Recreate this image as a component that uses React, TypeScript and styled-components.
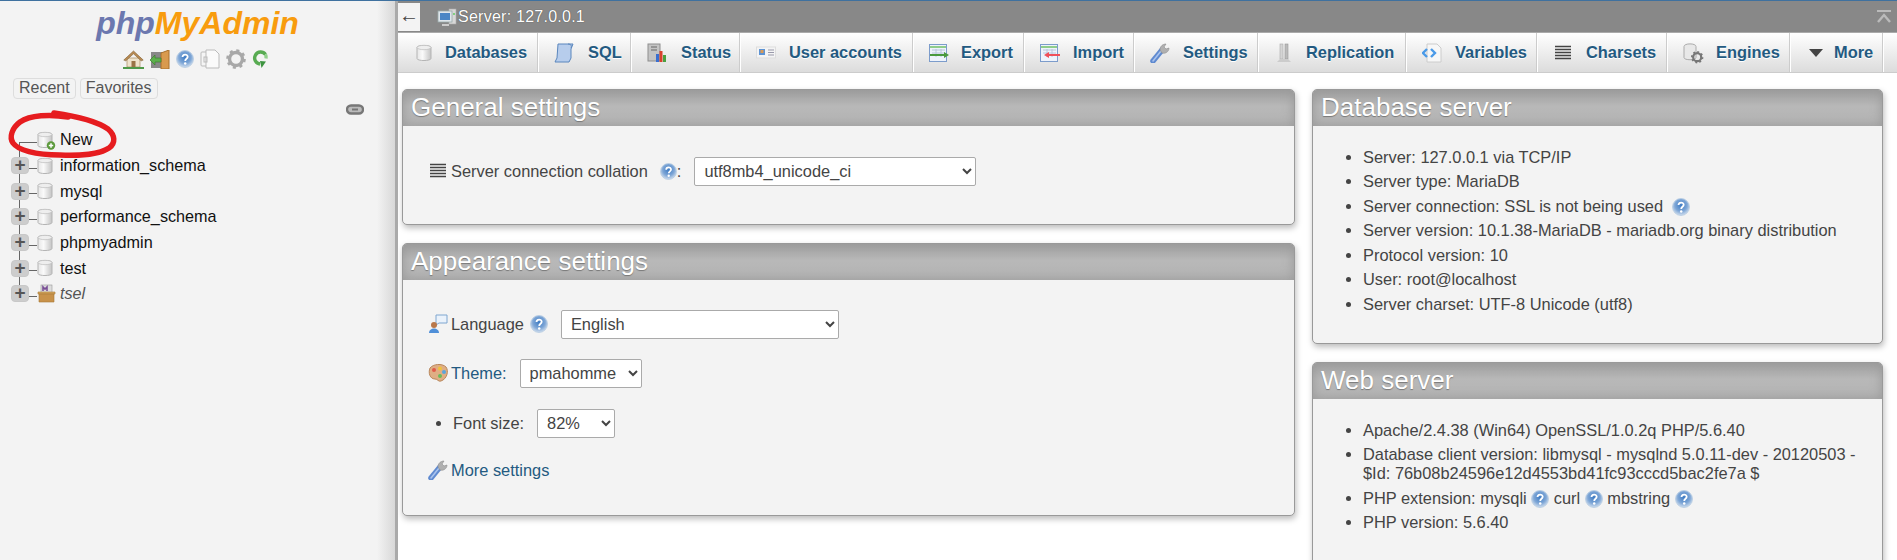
import React from 'react';
import styled, { createGlobalStyle } from 'styled-components';

const Global = createGlobalStyle`
  html, body { margin: 0; padding: 0; height: 100%; overflow: hidden; background: #fff; }
  body { font-family: "Liberation Sans", Arial, sans-serif; color: #444; font-size: 16.4px; }
`;

const Page = styled.div`
  position: relative;
  display: flex;
  width: 1897px;
  height: 560px;
  overflow: hidden;
  border-top: 1px solid #3f719f;
  box-sizing: border-box;
`;

/* ---------- navigation ---------- */
const Sidebar = styled.aside`
  width: 395px;
  flex: none;
  background: linear-gradient(90deg, #f3f3f3 0, #f3f3f3 377px, #d8d8d8 395px);
  display: flex;
  flex-direction: column;
  padding-top: 7px;
  box-sizing: border-box;
`;
const Logo = styled.div`
  text-align: center;
  font: italic bold 32px/30px "Liberation Sans", Arial, sans-serif;
  color: #f89c0e;
  height: 33px;
  span { color: #6c78af; }
`;
const NavIcons = styled.div`
  display: flex;
  justify-content: center;
  align-items: center;
  gap: 6px;
  margin-top: 7px;
  height: 22px;
  padding-right: 3px;
`;
const RecentRow = styled.div`
  display: flex;
  gap: 4px;
  margin: 8px 0 0 13px;
`;
const SmallBtn = styled.div`
  border: 1px solid #ddd;
  border-radius: 4px;
  padding: 0 5px;
  height: 19px;
  line-height: 18px;
  color: #555;
  font-size: 16px;
`;
const LinkRow = styled.div`
  display: flex;
  justify-content: flex-end;
  padding: 5px 31px 0 0;
  height: 13px;
`;
const Tree = styled.ul`
  list-style: none;
  margin: 10px 0 0;
  padding: 0 0 0 11px;
`;
const TreeRow = styled.li<{ $first?: boolean; $last?: boolean }>`
  position: relative;
  display: flex;
  align-items: center;
  height: 25.7px;
  &::before {
    content: '';
    position: absolute;
    left: 8px;
    top: ${p => (p.$first ? '15px' : '-3px')};
    bottom: ${p => (p.$last ? '10px' : '-3px')};
    border-left: 1px solid #666;
  }
  &::after {
    content: '';
    position: absolute;
    left: 8px;
    width: 18px;
    top: 15px;
    border-top: 1px solid #666;
  }
`;
const Expander = styled.span<{ $hidden?: boolean }>`
  position: relative;
  z-index: 1;
  width: 18px;
  height: 17px;
  box-sizing: border-box;
  border: 1px solid #c8c8c8;
  border-radius: 4px;
  background: #cdcdcd;
  color: #555;
  font: bold 19px/14px "Liberation Sans", sans-serif;
  text-align: center;
  visibility: ${p => (p.$hidden ? 'hidden' : 'visible')};
`;
const TreeIcon = styled.span`
  position: relative;
  z-index: 1;
  display: flex;
  width: 16px;
  margin-left: 8px;
`;
const TreeLabel = styled.span<{ $italic?: boolean }>`
  margin-left: 7px;
  color: ${p => (p.$italic ? '#555' : '#111')};
  font-style: ${p => (p.$italic ? 'italic' : 'normal')};
  font-size: 16.2px;
`;
const Scribble = styled.svg`
  position: absolute;
  left: 0;
  top: -1px;
  pointer-events: none;
`;

/* ---------- main ---------- */
const Main = styled.main`
  flex: 1;
  min-width: 0;
  border-left: 3px solid #aaa;
  display: flex;
  flex-direction: column;
`;
const ServerBar = styled.header`
  height: 31px;
  flex: none;
  background: #888;
  display: flex;
  align-items: center;
  color: #fff;
  font-size: 16px;
  text-shadow: 0 0 1px #333;
`;
const BackBtn = styled.div`
  width: 22px;
  height: 28px;
  margin-right: 17px;
  background: #f3f3f3;
  color: #444;
  text-shadow: none;
  text-align: center;
  font: 20px/25px "Liberation Serif", serif;
`;
const ServerText = styled.span`
  margin-left: 1px;
  letter-spacing: 0.25px;
`;
const CollapseIcon = styled.svg`
  margin-left: auto;
  margin-right: 6px;
`;
const Menu = styled.nav`
  display: flex;
  flex: none;
  height: 41px;
  background: linear-gradient(#fff, #dcdcdc);
  border-bottom: 1px solid #ccc;
  border-top: 1px solid #aaa;
  box-sizing: border-box;
`;
const Tab = styled.a<{ $w: number }>`
  display: flex;
  align-items: center;
  width: ${p => p.$w}px;
  flex: none;
  box-sizing: border-box;
  padding-left: 16px;
  border-right: 1px solid #ccc;
  box-shadow: 1px 0 0 #fff;
  color: #235a81;
  font-weight: bold;
  font-size: 16.4px;
  text-shadow: 0 1px 0 #fff;
  white-space: nowrap;
`;
const TabIcon = styled.span<{ $gap: number }>`
  display: flex;
  justify-content: center;
  width: 20px;
  margin-right: ${p => p.$gap}px;
  flex: none;
`;
const Content = styled.div`
  flex: 1;
  min-height: 0;
  display: grid;
  grid-template-columns: 893px 571px;
  column-gap: 17px;
  padding: 16px 0 0 4px;
  align-items: start;
`;
const Column = styled.div`
  display: flex;
  flex-direction: column;
  gap: 18px;
`;
const Panel = styled.section<{ $h: number }>`
  border: 1px solid #999;
  border-radius: 5px;
  background: #f3f3f3;
  box-shadow: 1px 3px 6px #bbb;
  height: ${p => p.$h}px;
  flex: none;
  box-sizing: border-box;
  overflow: hidden;
`;
const PanelTitle = styled.h2`
  margin: 0;
  height: 36px;
  padding-left: 8px;
  background: linear-gradient(#a0a0a0, #b8b8b8 45%, #b4b4b4);
  box-shadow: inset 0 0 12px #999;
  color: #fff;
  font: normal 26px/34px "Liberation Sans", Arial, sans-serif;
  text-shadow: 0 1px 1px #777;
`;
const FormBody = styled.div<{ $pad: number }>`
  padding: ${p => p.$pad}px 0 0 24px;
  display: flex;
  flex-direction: column;
`;
const FormRow = styled.div<{ $mt?: number }>`
  display: flex;
  align-items: center;
  height: 30px;
  margin-top: ${p => p.$mt ?? 0}px;
`;
const RowIcon = styled.span`
  display: flex;
  justify-content: center;
  width: 21px;
  margin-right: 3px;
`;
const Bullet = styled.span`
  width: 5px;
  height: 5px;
  border-radius: 50%;
  background: #444;
  margin: 0 12px 0 9px;
  flex: none;
`;
const RowLink = styled.span`
  color: #235a81;
`;
const HelpGap = styled.span<{ $w: number }>`
  display: inline-flex;
  margin-left: ${p => p.$w}px;
`;
const Select = styled.select<{ $w: number }>`
  width: ${p => p.$w}px;
  height: 29px;
  margin-left: 13px;
  background: #fff;
  border: 1px solid #aaa;
  border-radius: 2px;
  color: #444;
  font: 16.4px "Liberation Sans", Arial, sans-serif;
  padding: 0 5px;
`;
const InfoList = styled.ul`
  margin: 0;
  padding: 21.5px 24px 0 50px;
`;
const InfoItem = styled.li`
  margin-bottom: 5.5px;
  line-height: 19px;
  svg { vertical-align: -4px; }
`;

const Help = ({ s = 17 }: { s?: number }) => (
  <svg width={s} height={s} viewBox="0 0 16 16" style={{ flex: 'none' }}>
    <defs>
      <radialGradient id="hlp" cx="50%" cy="40%" r="60%">
        <stop offset="0" stopColor="#3f7cc4" />
        <stop offset="0.6" stopColor="#7ea6d6" />
        <stop offset="1" stopColor="#d0deee" />
      </radialGradient>
    </defs>
    <circle cx="8" cy="8" r="7.5" fill="url(#hlp)" stroke="#b7cce2" strokeWidth="0.8" />
    <path d="M5.8 6.3c0-3 4.6-3 4.6-.2 0 1.8-2.2 1.7-2.2 3.6" fill="none" stroke="#fff" strokeWidth="1.6" />
    <circle cx="8.2" cy="12" r="1.1" fill="#fff" />
  </svg>
);

const Db = ({ w = 16, h = 18, plus = false }: { w?: number; h?: number; plus?: boolean }) => (
  <svg width={w} height={h} viewBox="0 0 16 18" style={{ overflow: 'visible' }}>
    <defs>
      <linearGradient id="dbg" x1="0" x2="1" y1="0" y2="0">
        <stop offset="0" stopColor="#e6e6e6" />
        <stop offset="0.4" stopColor="#fafafa" />
        <stop offset="1" stopColor="#c4c4c4" />
      </linearGradient>
    </defs>
    <path d="M1 3.5C1 .8 15 .8 15 3.5v11c0 2.7-14 2.7-14 0z" fill="url(#dbg)" stroke="#b4b4b4" />
    <ellipse cx="8" cy="3.5" rx="7" ry="2.2" fill="#eee" stroke="#bbb" strokeWidth="0.7" />
    {plus && (
      <>
        <circle cx="14" cy="14.5" r="4.2" fill="#5c9a3c" />
        <path d="M11.8 14.5h4.4M14 12.3v4.4" stroke="#fff" strokeWidth="1.5" />
      </>
    )}
  </svg>
);

const Home = () => (
  <svg width="21" height="19" viewBox="0 0 21 19">
    <rect x="4" y="8" width="13" height="9" fill="#efe3cc" stroke="#a98a5e" strokeWidth="0.7" />
    <path d="M10.5 1 .8 10l2 .8 7.7-7 7.7 7 2-.8z" fill="#b98a52" stroke="#8a6a3f" strokeWidth="0.7" />
    <rect x="8.5" y="11" width="4" height="6" fill="#9a7446" />
    <path d="M0 18h21" stroke="#4f9a4a" strokeWidth="2" />
  </svg>
);
const ExitDoor = () => (
  <svg width="20" height="19" viewBox="0 0 20 19">
    <rect x="1" y="2" width="11" height="16" fill="#888" />
    <path d="M11 3l8-3v19h-8z" fill="#d99a4e" stroke="#a8702c" />
    <path d="M0 10l5-5v3h6v4H5v3z" fill="#5cb04c" stroke="#3c7f30" strokeWidth="0.7" />
  </svg>
);
const Docs = () => (
  <svg width="20" height="20" viewBox="0 0 20 20">
    <rect x="1" y="3" width="10" height="14" rx="1" fill="#f5f5f5" stroke="#bbb" />
    <path d="M6 1h9l4 4v14H6z" fill="#fafafa" stroke="#bbb" />
    <rect x="4" y="8" width="3" height="5" fill="none" stroke="#bbb" />
  </svg>
);
const Gear = ({ s = 20, c = '#a8a8a8' }: { s?: number; c?: string }) => (
  <svg width={s} height={s} viewBox="0 0 20 20">
    <circle cx="10" cy="10" r="6.5" fill="none" stroke={c} strokeWidth="3.4" />
    <circle cx="10" cy="10" r="8.4" fill="none" stroke={c} strokeWidth="2.8" strokeDasharray="3 3.6" />
  </svg>
);
const Reload = () => (
  <svg width="17" height="19" viewBox="0 0 17 19">
    <path d="M13.5 4.5A6 6 0 1 0 8 14" fill="none" stroke="#58ab52" strokeWidth="3.4" />
    <path d="M13.5 4.5a6 6 0 0 1 .5 4" fill="none" stroke="#8fd08a" strokeWidth="3.4" />
    <path d="M8 11l6 .5-4.5 6.5z" fill="#3d9440" />
  </svg>
);
const ChainLink = () => (
  <svg width="18" height="11" viewBox="0 0 18 11">
    <rect x="1" y="1.5" width="16" height="8" rx="4" fill="#bbb" stroke="#777" strokeWidth="2.4" />
    <path d="M6 5.5h6" stroke="#777" strokeWidth="2" />
  </svg>
);
const Archive = () => (
  <svg width="19" height="19" viewBox="0 0 19 19" style={{ overflow: 'visible' }}>
    <rect x="4" y="1" width="11" height="8" fill="#ddd" stroke="#999" strokeWidth="0.6" />
    <path d="M6 7V3l2 2 2-2v4" fill="none" stroke="#7a4f96" strokeWidth="1.6" />
    <path d="M1 8h17v2H1z" fill="#d8a860" stroke="#a87a36" strokeWidth="0.6" />
    <path d="M2 10h15v8H2z" fill="#c8924a" stroke="#a87a36" strokeWidth="0.6" />
  </svg>
);
const ServerIcon = () => (
  <svg width="20" height="20" viewBox="0 0 20 20">
    <rect x="12" y="2" width="7" height="15" fill="#d8d8d8" stroke="#aaa" strokeWidth="0.6" />
    <rect x="1" y="4" width="14" height="11" fill="#dfe6ec" stroke="#9aa" strokeWidth="0.8" />
    <rect x="3" y="6" width="10" height="7" fill="#4a86c5" />
    <path d="M5 18h7" stroke="#ccc" strokeWidth="2" />
    <circle cx="17" cy="7" r="0.9" fill="#5c5" />
  </svg>
);
const Scroll = () => (
  <svg width="20" height="20" viewBox="0 0 20 20">
    <path d="M4 1h15l-2 5v9l-2 4H1l2-4z" fill="#b7cdec" stroke="#5a86bd" />
    <path d="M14 1c3 0 4 2 3 4" fill="none" stroke="#5a86bd" />
  </svg>
);
const StatusIcon = () => (
  <svg width="20" height="20" viewBox="0 0 20 20">
    <rect x="1" y="1" width="12" height="17" fill="#c4c4c4" stroke="#8e8e8e" />
    <path d="M4 4h6M4 7h6" stroke="#666" />
    <rect x="9" y="11" width="3" height="8" fill="#3a6fd0" />
    <rect x="12.5" y="8" width="3" height="11" fill="#d8402c" />
    <rect x="16" y="12" width="3" height="7" fill="#49a040" />
  </svg>
);
const UserCard = () => (
  <svg width="20" height="14" viewBox="0 0 20 14">
    <rect x="0.5" y="1" width="19" height="11" fill="#f4f4f4" stroke="#ddd" />
    <rect x="3" y="3" width="6" height="6" fill="#5d93d3" />
    <rect x="4.5" y="4" width="3" height="3" fill="#d89a58" />
    <path d="M12 4h6M12 6.5h6M12 9h6" stroke="#99a" />
  </svg>
);
const TableArrow = ({ c, dir }: { c: string; dir: 'in' | 'out' }) => (
  <svg width="20" height="18" viewBox="0 0 20 18" style={{ overflow: 'visible' }}>
    <rect x="0.5" y="0.5" width="17" height="17" fill="#eef3fb" stroke="#7c9ccb" />
    <path d="M1 3h16" stroke="#6fc066" strokeWidth="1.5" />
    <path d="M3 6h13M3 9h13M7 5v8M12 5v8" stroke="#b8c6dc" />
    {dir === 'out' ? (
      <path d="M1 10h14V8l5 3-5 3v-2H1z" fill={c} />
    ) : (
      <path d="M20 10H9V8l-5 3 5 3v-2h11z" fill={c} />
    )}
  </svg>
);
const Wrench = ({ s = 20 }: { s?: number }) => (
  <svg width={s} height={s} viewBox="0 0 20 20">
    <path d="M3 18 12 7" stroke="#5f8ad0" strokeWidth="5.5" strokeLinecap="round" />
    <path d="M3 18 11 8" stroke="#a9c3ee" strokeWidth="1.6" strokeLinecap="round" />
    <path d="M10 7c0-4 3-6 6-6l-2 3 2 2 3-1c0 4-4 6-7 5z" fill="#b0b0b0" stroke="#8d8d8d" strokeWidth="0.6" />
  </svg>
);
const Replication = () => (
  <svg width="16" height="20" viewBox="0 0 16 20">
    <rect x="4" y="1" width="3" height="15" fill="#d4d4d4" stroke="#aaa" strokeWidth="0.6" />
    <rect x="9" y="1" width="3" height="15" fill="#bbb" stroke="#999" strokeWidth="0.6" />
    <path d="M1 19h14l-3-3H4z" fill="#ccc" />
  </svg>
);
const Variables = () => (
  <svg width="20" height="20" viewBox="0 0 20 20">
    <path d="M5 1h10l4 4v14H5z" fill="#f7f7f7" stroke="#ccc" />
    <path d="M5 6l-4 4 4 4" fill="none" stroke="#4a9ae8" strokeWidth="2.4" />
    <path d="M9 6l4 4-4 4" fill="none" stroke="#4a9ae8" strokeWidth="2.4" />
  </svg>
);
const Lines = () => (
  <svg width="16" height="16" viewBox="0 0 16 16">
    <path d="M0 1.5h16M0 4.5h16M0 7.5h16M0 10.5h16M0 13.5h16" stroke="#444" strokeWidth="1.5" />
  </svg>
);
const EngineIcon = () => (
  <svg width="20" height="20" viewBox="0 0 20 20" style={{ overflow: 'visible' }}>
    <path d="M1 3.5C1 0 13 0 13 3.5v11c0 3-12 3-12 0z" fill="#e8e8e8" stroke="#aaa" />
    <g transform="translate(8 8) scale(0.62)">
      <circle cx="10" cy="10" r="6.5" fill="none" stroke="#777" strokeWidth="3.6" />
      <circle cx="10" cy="10" r="8.6" fill="none" stroke="#777" strokeWidth="2.8" strokeDasharray="3 3.6" />
    </g>
  </svg>
);
const Caret = () => (
  <svg width="14" height="8" viewBox="0 0 14 8">
    <path d="M0 0h14L7 8z" fill="#444" />
  </svg>
);
const LangIcon = () => (
  <svg width="20" height="20" viewBox="0 0 20 20">
    <path d="M8 1h11v8H11l-3 2z" fill="#eaf2fb" stroke="#7fa6d0" />
    <circle cx="6" cy="11" r="3" fill="#b9784a" />
    <path d="M1 19c0-6 10-6 10 0z" fill="#4f8fd8" />
  </svg>
);
const Palette = () => (
  <svg width="20" height="20" viewBox="0 0 20 20">
    <path d="M2 5c3-4 12-5 16-1 3 4 1 12-5 14-3 1-3-2-6-2-5 0-7-6-5-11z" fill="#dfae84" stroke="#b9875c" />
    <circle cx="6" cy="7" r="2" fill="#e25a4a" />
    <circle cx="12" cy="5.5" r="2" fill="#f0c23c" />
    <circle cx="16" cy="9" r="2" fill="#5aa4dc" />
    <circle cx="12" cy="13" r="2" fill="#6abb5a" />
  </svg>
);

const tabs: { label: string; w: number; gap: number; icon: React.ReactNode }[] = [
  { label: 'Databases', w: 140, gap: 11, icon: <Db /> },
  { label: 'SQL', w: 93, gap: 14, icon: <Scroll /> },
  { label: 'Status', w: 109, gap: 14, icon: <StatusIcon /> },
  { label: 'User accounts', w: 173, gap: 13, icon: <UserCard /> },
  { label: 'Export', w: 111, gap: 12, icon: <TableArrow c="#4a9a3e" dir="out" /> },
  { label: 'Import', w: 110, gap: 13, icon: <TableArrow c="#f0505a" dir="in" /> },
  { label: 'Settings', w: 124, gap: 13, icon: <Wrench /> },
  { label: 'Replication', w: 148, gap: 12, icon: <Replication /> },
  { label: 'Variables', w: 131, gap: 13, icon: <Variables /> },
  { label: 'Charsets', w: 130, gap: 13, icon: <Lines /> },
  { label: 'Engines', w: 123, gap: 13, icon: <EngineIcon /> },
  { label: 'More', w: 93, gap: 8, icon: <Caret /> },
];

const dbs = ['information_schema', 'mysql', 'performance_schema', 'phpmyadmin', 'test'];

export default function App() {
  return (
    <>
      <Global />
      <Page>
        <Sidebar>
          <Logo><span>php</span>MyAdmin</Logo>
          <NavIcons>
            <Home /><ExitDoor /><Help s={18} /><Docs /><Gear /><Reload />
          </NavIcons>
          <RecentRow>
            <SmallBtn>Recent</SmallBtn>
            <SmallBtn>Favorites</SmallBtn>
          </RecentRow>
          <LinkRow><ChainLink /></LinkRow>
          <Tree>
            <TreeRow $first>
              <Expander $hidden />
              <TreeIcon><Db plus /></TreeIcon>
              <TreeLabel>New</TreeLabel>
            </TreeRow>
            {dbs.map(d => (
              <TreeRow key={d}>
                <Expander>+</Expander>
                <TreeIcon><Db /></TreeIcon>
                <TreeLabel>{d}</TreeLabel>
              </TreeRow>
            ))}
            <TreeRow $last>
              <Expander>+</Expander>
              <TreeIcon><Archive /></TreeIcon>
              <TreeLabel $italic>tsel</TreeLabel>
            </TreeRow>
          </Tree>
        </Sidebar>
        <Main>
          <ServerBar>
            <BackBtn>←</BackBtn>
            <ServerIcon />
            <ServerText>Server: 127.0.0.1</ServerText>
            <CollapseIcon width="14" height="14" viewBox="0 0 14 14">
              <path d="M0 1h14" stroke="#bbb" strokeWidth="2" />
              <path d="M1 12l6-7 6 7" fill="none" stroke="#bbb" strokeWidth="2.4" />
            </CollapseIcon>
          </ServerBar>
          <Menu>
            {tabs.map(t => (
              <Tab key={t.label} $w={t.w}>
                <TabIcon $gap={t.gap}>{t.icon}</TabIcon>
                {t.label}
              </Tab>
            ))}
          </Menu>
          <Content>
            <Column>
              <Panel $h={136}>
                <PanelTitle>General settings</PanelTitle>
                <FormBody $pad={30}>
                  <FormRow>
                    <RowIcon><Lines /></RowIcon>
                    Server connection collation
                    <HelpGap $w={12}><Help /></HelpGap>:
                    <Select $w={282} defaultValue="a"><option value="a">utf8mb4_unicode_ci</option></Select>
                  </FormRow>
                </FormBody>
              </Panel>
              <Panel $h={273}>
                <PanelTitle>Appearance settings</PanelTitle>
                <FormBody $pad={29}>
                  <FormRow>
                    <RowIcon><LangIcon /></RowIcon>
                    Language
                    <HelpGap $w={6}><Help s={18} /></HelpGap>
                    <Select $w={278} defaultValue="a"><option value="a">English</option></Select>
                  </FormRow>
                  <FormRow $mt={19}>
                    <RowIcon><Palette /></RowIcon>
                    <RowLink>Theme:</RowLink>
                    <Select $w={122} defaultValue="a"><option value="a">pmahomme</option></Select>
                  </FormRow>
                  <FormRow $mt={20}>
                    <Bullet />
                    Font size:
                    <Select $w={78} defaultValue="a"><option value="a">82%</option></Select>
                  </FormRow>
                  <FormRow $mt={17}>
                    <RowIcon><Wrench /></RowIcon>
                    <RowLink>More settings</RowLink>
                  </FormRow>
                </FormBody>
              </Panel>
            </Column>
            <Column>
              <Panel $h={255}>
                <PanelTitle>Database server</PanelTitle>
                <InfoList>
                  <InfoItem>Server: 127.0.0.1 via TCP/IP</InfoItem>
                  <InfoItem>Server type: MariaDB</InfoItem>
                  <InfoItem>Server connection: SSL is not being used &nbsp;<Help s={18} /></InfoItem>
                  <InfoItem>Server version: 10.1.38-MariaDB - mariadb.org binary distribution</InfoItem>
                  <InfoItem>Protocol version: 10</InfoItem>
                  <InfoItem>User: root@localhost</InfoItem>
                  <InfoItem>Server charset: UTF-8 Unicode (utf8)</InfoItem>
                </InfoList>
              </Panel>
              <Panel $h={300}>
                <PanelTitle>Web server</PanelTitle>
                <InfoList>
                  <InfoItem>Apache/2.4.38 (Win64) OpenSSL/1.0.2q PHP/5.6.40</InfoItem>
                  <InfoItem>Database client version: libmysql - mysqlnd 5.0.11-dev - 20120503 - $Id: 76b08b24596e12d4553bd41fc93cccd5bac2fe7a $</InfoItem>
                  <InfoItem>PHP extension: mysqli <Help s={18} /> curl <Help s={18} /> mbstring <Help s={18} /></InfoItem>
                  <InfoItem>PHP version: 5.6.40</InfoItem>
                </InfoList>
              </Panel>
            </Column>
          </Content>
        </Main>
        <Scribble width="130" height="170" viewBox="0 0 130 170">
          <path
            d="M68 117C50 114 30 115 20 122C12 128 9 137 13 143C18 150 35 155 60 155C80 156 100 154 109 148C116 143 115 135 108 129C95 120 75 116 54 113"
            fill="none"
            stroke="#e61c1f"
            strokeWidth="5.5"
            strokeLinecap="round"
          />
        </Scribble>
      </Page>
    </>
  );
}
